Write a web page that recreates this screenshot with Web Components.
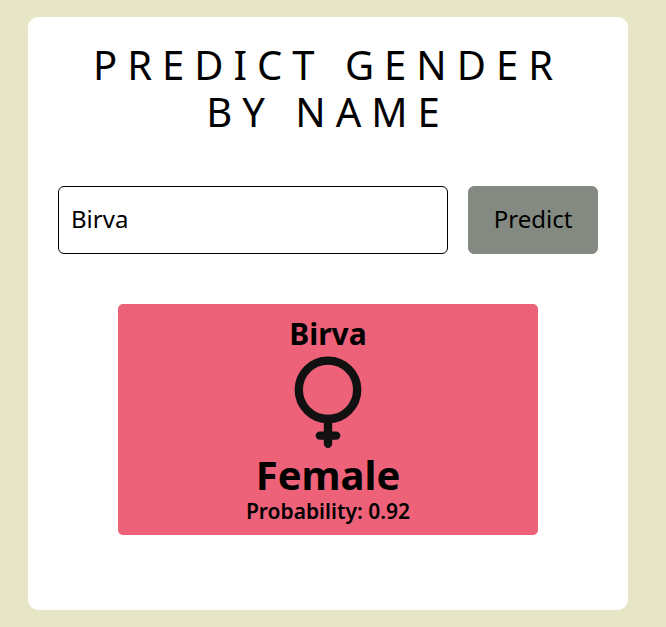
<!DOCTYPE html>
<html lang="en">
<head>
<meta charset="utf-8">
<meta name="viewport" content="width=device-width, initial-scale=1">
<title>Predict Gender by Name</title>
<style>
  body {
    margin: 0;
    background: #e6e5c5;
    color: #000;
    font-family: "Lucida Sans", "Noto Sans", "Open Sans", sans-serif;
  }
</style>
</head>
<body>
<gender-app>
  <name-form value="Birva"></name-form>
  <gender-result>
    <span slot="name">Birva</span>
    <gender-icon slot="icon"></gender-icon>
    <span slot="gender">Female</span>
    <span slot="probability">Probability: 0.92</span>
  </gender-result>
</gender-app>

<script>
  function define(name, html) {
    const template = document.createElement('template');
    template.innerHTML = html;
    customElements.define(name, class extends HTMLElement {
      constructor() {
        super();
        this.attachShadow({ mode: 'open' }).append(template.content.cloneNode(true));
      }
      connectedCallback() {
        const input = this.shadowRoot.querySelector('input');
        if (input) input.value = this.getAttribute('value') || '';
      }
    });
  }

  define('gender-app', `
    <style>
      :host { display: block; padding: 17px 38px 17px 28px; }
      main {
        box-sizing: border-box;
        max-width: 600px;
        margin: 0 auto;
        padding: 24px 30px 75px;
        background: #fff;
        border-radius: 10px;
      }
      h1 {
        margin: 0 0 51px;
        font-size: 40px;
        line-height: 47px;
        font-weight: 400;
        letter-spacing: 10px;
        text-align: center;
        text-transform: uppercase;
      }
    </style>
    <main>
      <h1>Predict Gender by Name</h1>
      <slot></slot>
    </main>`);

  define('name-form', `
    <style>
      :host { display: block; }
      form { display: grid; grid-template-columns: 3fr 1fr; gap: 20px; }
      input, button {
        box-sizing: border-box;
        width: 100%;
        min-width: 0;
        margin: 0;
        padding: 15px 12px 17px;
        font: inherit;
        font-size: 24px;
        line-height: 34px;
        color: #000;
        border: 1px solid #000;
        border-radius: 6px;
        background: #fff;
        outline: none;
      }
      button { border-color: #848a82; background: #848a82; cursor: pointer; }
      input:focus-visible, button:focus-visible { box-shadow: 0 0 0 2px #848a82; }
    </style>
    <form onsubmit="return false">
      <input type="text" aria-label="Name" autocomplete="off" spellcheck="false">
      <button type="submit">Predict</button>
    </form>`);

  define('gender-icon', `
    <style>
      :host { display: block; line-height: 0; }
      svg { width: 100px; height: 99px; }
    </style>
    <svg viewBox="0 1 100 99" fill="none" stroke="#111" stroke-width="8.4" stroke-linecap="round" aria-hidden="true">
      <circle cx="50" cy="38.8" r="29.2"/>
      <path d="M50 68v24.7M41.8 84.6h16.4"/>
    </svg>`);

  define('gender-result', `
    <style>
      :host { display: block; margin: 50px 60px 0; }
      section {
        display: flex;
        flex-direction: column;
        align-items: center;
        padding: 12px 12px 12px;
        border-radius: 5px;
        background: #ee6279;
        text-align: center;
      }
      h2, h3, p { margin: 0; font-weight: 700; }
      h3 { font-size: 30px; line-height: 36px; }
      h2 { font-size: 40px; line-height: 48px; }
      p { font-size: 21px; line-height: 24px; font-weight: 600; }
    </style>
    <section>
      <h3><slot name="name"></slot></h3>
      <slot name="icon"></slot>
      <h2><slot name="gender"></slot></h2>
      <p><slot name="probability"></slot></p>
    </section>`);
</script>
</body>
</html>
